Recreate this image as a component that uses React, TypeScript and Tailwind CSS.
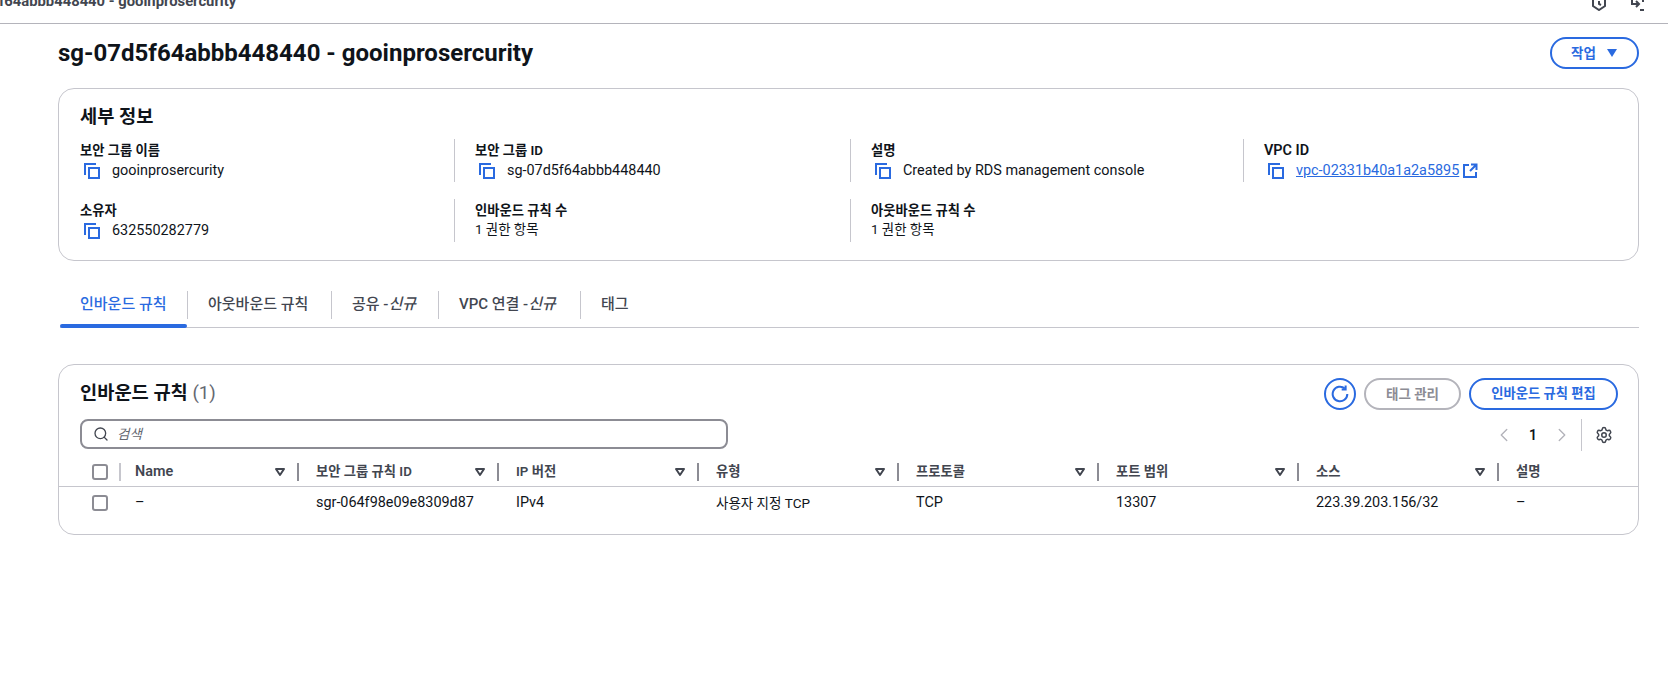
import React from 'react'
import { ChevronLeft, ChevronRight, Search, Settings } from 'lucide-react'

const font = 'font-["Roboto","Noto_Sans_CJK_KR",sans-serif]'

const CopyIcon = () => (
  <svg viewBox="0 0 16 16" className="w-4 h-4 shrink-0 text-[#2a6ae0]" fill="none" stroke="currentColor" strokeWidth="2">
    <path d="M1 12V1h11" />
    <rect x="5" y="5" width="10" height="10" />
  </svg>
)

const ExternalIcon = () => (
  <svg viewBox="0 0 16 16" className="w-4 h-4 shrink-0 text-[#2a6ae0]" fill="none" stroke="currentColor" strokeWidth="2">
    <path d="M7 2H2v12h12V9" />
    <path d="M9 1.500h5.500V7M14 2 8 8" />
  </svg>
)

const SortIcon = () => (
  <svg viewBox="0 0 12 10" className="w-3 h-[10px] shrink-0 text-[#424650]" fill="none" stroke="currentColor" strokeWidth="2">
    <path d="M2 2h8L6 8z" strokeLinejoin="round" />
  </svg>
)

const Detail = ({ label, value, copy = true, link = false, first = false }: { label: string; value: string; copy?: boolean; link?: boolean; first?: boolean }) => (
  <div className={first ? 'h-[43px]' : 'h-[43px] border-l border-[#c6c6cd] pl-[20px]'}>
    <div className={`${label === 'VPC ID' ? 'text-[14.400px]' : 'text-[13.300px]'} leading-[20px] font-semibold text-[#0f141a] mt-[2px]`}>{label}</div>
    <div className={`flex items-center h-[19px] ${copy ? 'text-[14.400px]' : 'text-[13.400px]'} text-[#0f141a]`}>
      {copy && <span className="ml-[4px] mr-[12px]"><CopyIcon /></span>}
      {link ? (
        <span className="flex items-center gap-[3px] text-[#2a6ae0]">
          <span className="underline">{value}</span>
          <ExternalIcon />
        </span>
      ) : (
        value
      )}
    </div>
  </div>
)

const columns = ['보안 그룹 규칙 ID', 'IP 버전', '유형', '프로토콜', '포트 범위', '소스', '설명']
const row = ['sgr-064f98e09e8309d87', 'IPv4', '사용자 지정 TCP', 'TCP', '13307', '223.39.203.156/32', '–']

const Checkbox = () => <span className="block w-[16px] h-[16px] rounded-[3px] border-2 border-[#8c8c94] bg-white" />

const Tabs = () => {
  const tabs: { text: string; tag?: string; w: string }[] = [
    { text: '인바운드 규칙', w: 'w-[127px]' },
    { text: '아웃바운드 규칙', w: 'w-[144px]' },
    { text: '공유 -', tag: '신규', w: 'w-[107px]' },
    { text: 'VPC 연결 -', tag: '신규', w: 'w-[142px]' },
    { text: '태그', w: 'w-[70px]' },
  ]
  return (
    <div className="flex h-[40px] mt-[27px] ml-[2px] border-b border-[#c6c6cd]">
      {tabs.map((t, i) => (
        <div
          key={t.text}
          className={`${t.w} relative flex items-start pt-[4px] ${i === 0 ? 'pl-[20px] text-[#2a6ae0]' : 'pl-[21px] text-[#424650]'} text-[15px] leading-[24px] font-medium`}
        >
          {i > 0 && <span className="absolute left-0 top-[3px] h-[28px] w-px bg-[#c6c6cd]" />}
          <span className="whitespace-nowrap">
            {t.text}
            {t.tag && <i>{t.tag}</i>}
          </span>
          {i === 0 && <span className="absolute left-0 right-0 bottom-[-1px] h-[4px] rounded-[2px] bg-[#2a6ae0]" />}
        </div>
      ))}
    </div>
  )
}

export default function App() {
  return (
    <div className={`${font} w-[1668px] h-[698px] bg-white overflow-hidden text-[#0f141a]`}>
      {/* clipped sticky header */}
      <div className="flex justify-between h-[24px] border-b border-[#b4b4bb] overflow-hidden">
        <span className="-mt-[9px] -ml-[1px] text-[14.800px] leading-[20px] font-bold text-[#424650] whitespace-nowrap">f64abbb448440 - gooinprosercurity</span>
        <div className="flex gap-[22px] mr-[23px] -mt-[5px] text-[#424650]">
          <svg viewBox="0 0 16 16" className="w-4 h-4" fill="none" stroke="currentColor" strokeWidth="2">
            <path d="M2 1v10l6 4 6-4V1" />
            <path d="M8 6v3l2 1" />
          </svg>
          <svg viewBox="0 0 16 16" className="w-4 h-4" fill="none" stroke="currentColor" strokeWidth="2">
            <path d="M3 1v8h7M7 6l3 3-3 3M11 15h4M14 5v2" />
          </svg>
        </div>
      </div>

      <div className="ml-[58px] w-[1581px]">
        <div className="flex justify-between items-center mt-[13px] h-[32px]">
          <h1 className="text-[24px] leading-[32px] font-bold whitespace-nowrap">sg-07d5f64abbb448440 - gooinprosercurity</h1>
          <button className="flex items-center justify-center gap-[10px] w-[89px] h-[32px] rounded-full border-2 border-[#2a6ae0] text-[#2a6ae0] text-[13.500px] font-semibold">
            작업
            <svg viewBox="0 0 12 10" className="w-3 h-[10px]" fill="currentColor"><path d="M1 1h10L6 9z" /></svg>
          </button>
        </div>

        <section className="mt-[19px] h-[173px] rounded-[16px] border border-[#c6c6cd] pl-[21px] pt-[15px]">
          <h2 className="text-[18.700px] leading-[26px] font-semibold">세부 정보</h2>
          <div className="grid grid-cols-[374px_396px_393px_1fr] gap-y-[17px] mt-[9px]">
            <Detail first label="보안 그룹 이름" value="gooinprosercurity" />
            <Detail label="보안 그룹 ID" value="sg-07d5f64abbb448440" />
            <Detail label="설명" value="Created by RDS management console" />
            <Detail label="VPC ID" value="vpc-02331b40a1a2a5895" link />
            <Detail first label="소유자" value="632550282779" />
            <Detail label="인바운드 규칙 수" value="1 권한 항목" copy={false} />
            <Detail label="아웃바운드 규칙 수" value="1 권한 항목" copy={false} />
          </div>
        </section>

        <Tabs />

        <section className="mt-[36px] h-[171px] rounded-[16px] border border-[#c6c6cd] overflow-hidden">
          <div className="flex justify-between h-[54px] pt-[13px] pl-[21px] pr-[20px]">
            <h2 className="text-[18.700px] leading-[30px] font-semibold">
              인바운드 규칙 <span className="font-normal text-[#656871]">(1)</span>
            </h2>
            <div className="flex gap-[8px]">
              <button className="flex items-center justify-center w-[32px] h-[32px] rounded-full border-2 border-[#2a6ae0] text-[#2a6ae0]">
                <svg viewBox="0 0 16 16" className="w-[18px] h-[18px]" fill="none" stroke="currentColor" strokeWidth="1.800">
                  <path d="M14.500 8a6.500 6.500 0 1 1-2.200-4.900" />
                  <path d="M13 0.500v3.500H9.500" />
                </svg>
              </button>
              <button className="w-[97px] h-[32px] rounded-full border-2 border-[#b4b4bb] text-[#8c8c94] text-[13.500px] font-semibold">태그 관리</button>
              <button className="w-[149px] h-[32px] rounded-full border-2 border-[#2a6ae0] text-[#2a6ae0] text-[13.300px] font-semibold">인바운드 규칙 편집</button>
            </div>
          </div>

          <div className="flex justify-between pl-[21px] pr-[25px] h-[32px]">
            <div className="flex items-center gap-[8px] w-[648px] h-[30px] rounded-[8px] border-2 border-[#8c8c94] pl-[11px]">
              <Search size={16} strokeWidth={2} className="text-[#424650]" />
              <i className="text-[13.500px] text-[#656871]">검색</i>
            </div>
            <div className="flex items-center">
              <ChevronLeft size={22} strokeWidth={1.500} className="text-[#b4b4bb]" />
              <span className="mx-[14px] text-[14px] font-semibold">1</span>
              <ChevronRight size={22} strokeWidth={1.500} className="text-[#b4b4bb]" />
              <span className="ml-[8px] mr-[13px] h-[32px] w-px bg-[#c6c6cd]" />
              <Settings size={18} strokeWidth={2} className="text-[#424650]" />
            </div>
          </div>

          <div className="flex items-center h-[36px] pt-[6px] border-b border-[#c6c6cd] text-[13.300px] font-semibold text-[#424650]">
            <div className="flex items-center shrink-0 w-[240px] h-[18px]">
              <span className="ml-[33px]"><Checkbox /></span>
              <span className="ml-[11px] h-[18px] w-[2px] bg-[#c6c6cd]" />
              <span className="ml-[14px] flex-1 text-[14.400px]">Name</span>
              <span className="mr-[11px]"><SortIcon /></span>
              <span className="h-[18px] w-[2px] bg-[#8c8c94]" />
            </div>
            {columns.map((c, i) => (
              <div key={c} className="flex items-center shrink-0 w-[200px] h-[18px]">
                <span className="ml-[17px] flex-1 whitespace-nowrap">{c}</span>
                {i < columns.length - 1 && (
                  <>
                    <span className="mr-[11px]"><SortIcon /></span>
                    <span className="h-[18px] w-[2px] bg-[#8c8c94]" />
                  </>
                )}
              </div>
            ))}
          </div>

          <div className="flex items-center h-[32px] text-[14.400px] text-[#0f141a]">
            <div className="flex items-center shrink-0 w-[240px]">
              <span className="ml-[33px]"><Checkbox /></span>
              <span className="ml-[27px]">–</span>
            </div>
            {row.map((c, i) => (
              <div key={i} className={`shrink-0 w-[200px] pl-[17px] whitespace-nowrap ${i === 2 ? 'text-[13.500px]' : ''}`}>{c}</div>
            ))}
          </div>
        </section>
      </div>
    </div>
  )
}
